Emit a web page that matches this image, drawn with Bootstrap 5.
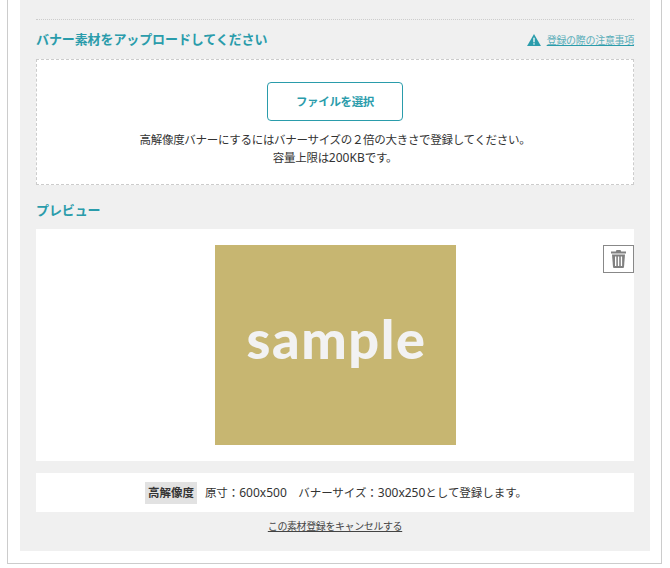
<!DOCTYPE html>
<html lang="ja">
  <head>
    <meta charset="utf-8" />
    <title>バナー素材</title>
    <link
      rel="stylesheet"
      href="https://cdn.jsdelivr.net/npm/bootstrap@5.3.0/dist/css/bootstrap.min.css"
    />
    <style>
      body {
        font-family: "Noto Sans", "Noto Sans CJK JP", sans-serif;
        font-size: 11.5px;
        letter-spacing: -0.3px;
        line-height: 18px;
        color: #333;
        background: #fff;
      }
      .outer-frame {
        width: 655px;
        height: 564px;
        margin-left: 7px;
        padding: 0 11px 0 12px;
        border: solid #ccc;
        border-width: 0 1px 1px 1px;
      }
      .gray-panel {
        background: #f0f0f0;
        height: 551px;
        padding: 0 16px;
      }
      .dot-rule {
        height: 20px;
        border-bottom: 1px dotted #ccc;
      }
      .head-row {
        height: 39px;
      }
      .teal-title {
        font-size: 13px;
        font-weight: 700;
        letter-spacing: -0.1px;
        color: #2a9cab;
        margin: 0;
      }
      .note-link {
        font-size: 10px;
        letter-spacing: -0.3px;
        color: #2a9cab;
        line-height: 14px;
        padding-left: 1px;
      }
      .note-link span {
        color: #5aaeb9;
        padding-left: 2px;
      }
      .drop-box {
        height: 126px;
        background: #fff;
        border: 1px dashed #ccc;
        padding-top: 22px;
      }
      .file-btn {
        width: 136px;
        height: 39px;
        font-size: 11.5px;
        font-weight: 700;
        letter-spacing: -0.35px;
        color: #2a9cab;
        background: #fff;
        border: 1px solid #2a9cab;
        border-radius: 4px;
        margin-bottom: 10px;
      }
      .num-text {
        font-size: 12px;
        letter-spacing: 0;
      }
      .preview-title {
        height: 44px;
        padding-top: 18px;
      }
      .preview-box {
        height: 232px;
        background: #fff;
        padding-top: 16px;
      }
      .sample-img {
        width: 241px;
        height: 200px;
        padding: 0 0 12px 3px;
        background: #c7b671;
        color: #f2f2f2;
        font-family: "Lato", sans-serif;
        font-size: 54px;
        font-weight: 900;
        letter-spacing: 1.6px;
      }
      .trash-btn {
        position: absolute;
        top: 16px;
        right: 0;
        width: 31px;
        height: 28px;
        background: #fff;
        border: 1px solid #888;
        border-radius: 0;
      }
      .info-strip {
        height: 39px;
        margin-top: 12px;
        padding-left: 2px;
        background: #fff;
        letter-spacing: -0.05px;
      }
      .hi-tag {
        background: #e2e2e2;
        font-weight: 700;
        padding: 2px 3px;
        margin-right: 8px;
      }
      .cancel-wrap {
        margin-top: 7px;
        line-height: 14px;
      }
      .cancel-link {
        font-size: 10px;
        letter-spacing: -0.4px;
        color: #444;
      }
    </style>
  </head>

  <body class="m-0">
    <div class="outer-frame">
      <div class="gray-panel">
        <div class="dot-rule"></div>
        <div class="head-row d-flex justify-content-between align-items-center">
          <h2 class="teal-title">バナー素材をアップロードしてください</h2>
          <a href="#" class="note-link d-flex align-items-center">
            <svg class="me-1" width="14" height="12" viewBox="0 0 15 13">
              <path d="M7.5 0 L15 13 H0 Z" fill="#2a9cab" />
              <rect x="6.8" y="4" width="1.4" height="5" fill="#fff" />
              <rect x="6.8" y="10" width="1.4" height="1.5" fill="#fff" />
            </svg>
            <span>登録の際の注意事項</span>
          </a>
        </div>

        <div class="drop-box text-center">
          <button type="button" class="btn file-btn p-0">ファイルを選択</button>
          <div>高解像度バナーにするにはバナーサイズの２倍の大きさで登録してください。</div>
          <div>容量上限は<span class="num-text">200KB</span>です。</div>
        </div>

        <div class="preview-title">
          <h2 class="teal-title">プレビュー</h2>
        </div>

        <div class="preview-box position-relative d-flex justify-content-center align-items-start">
          <div class="sample-img d-flex justify-content-center align-items-center">sample</div>
          <button type="button" class="btn trash-btn p-0 d-flex justify-content-center align-items-center" aria-label="削除">
            <svg width="15" height="18" viewBox="0 0 15 18">
              <path fill="#808080" d="M5.5 0 H9.5 L10.2 1.5 H15 V3.5 H0 V1.5 H4.8 Z" />
              <path fill="#808080" d="M1 4.5 H14 L13 17 Q12.9 18 12 18 H3 Q2.1 18 2 17 Z" />
              <rect x="4" y="6.5" width="1.3" height="9.5" fill="#fff" />
              <rect x="6.9" y="6.5" width="1.3" height="9.5" fill="#fff" />
              <rect x="9.8" y="6.5" width="1.3" height="9.5" fill="#fff" />
            </svg>
          </button>
        </div>

        <div class="info-strip d-flex justify-content-center align-items-center">
          <span class="hi-tag">高解像度</span>
          <span>原寸：<span class="num-text">600x500</span>　バナーサイズ：<span class="num-text">300x250</span>として登録します。</span>
        </div>

        <div class="text-center cancel-wrap">
          <a href="#" class="cancel-link">この素材登録をキャンセルする</a>
        </div>
      </div>
    </div>

    <script src="https://cdn.jsdelivr.net/npm/bootstrap@5.3.0/dist/js/bootstrap.bundle.min.js"></script>
  </body>
</html>
